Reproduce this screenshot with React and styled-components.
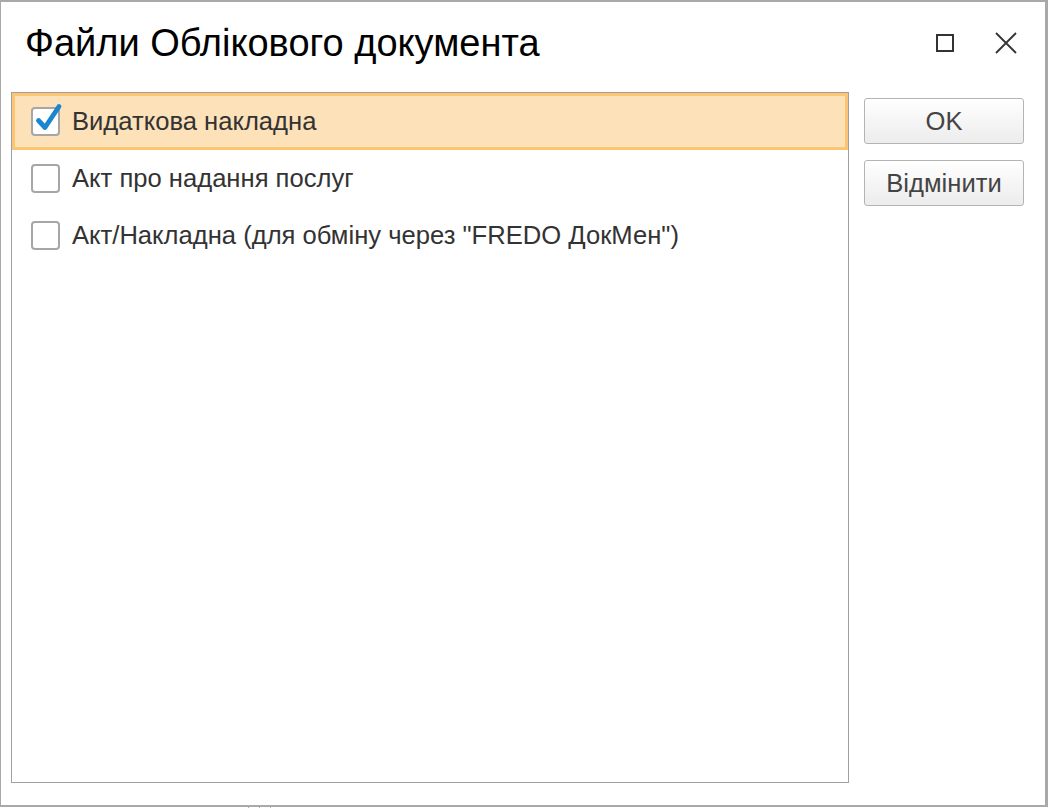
import React, { useState } from 'react'
import styled, { createGlobalStyle } from 'styled-components'

const GlobalStyle = createGlobalStyle`
  html, body {
    margin: 0;
    padding: 0;
    background: #ffffff;
  }
  body {
    font-family: "Liberation Sans", Arial, sans-serif;
  }
`;

const items = [
  'Видаткова накладна',
  'Акт про надання послуг',
  'Акт/Накладна (для обміну через "FREDO ДокМен")',
];

const App = () => {
  const [checked, setChecked] = useState([true, false, false]);
  const toggle = (i) => setChecked(checked.map((c, j) => (j === i ? !c : c)));

  return (
    <Page>
      <GlobalStyle />
      <Window>
        {/* Title bar */}
        <TitleBar>
          <Title>Файли Облікового документа</Title>
          <WindowButtons>
            <IconButton aria-label="maximize">
              <svg width="20" height="20" viewBox="0 0 20 20">
                <rect x="2" y="2" width="16" height="16" fill="none" stroke="#333" strokeWidth="2" />
              </svg>
            </IconButton>
            <IconButton aria-label="close">
              <svg width="22" height="22" viewBox="0 0 22 22">
                <path d="M1 1 L21 21 M21 1 L1 21" stroke="#333" strokeWidth="1.8" fill="none" />
              </svg>
            </IconButton>
          </WindowButtons>
        </TitleBar>

        {/* Body */}
        <Body>
          <List>
            {items.map((label, i) => (
              <Row key={label} $selected={i === 0} onClick={() => toggle(i)}>
                <Check>
                  {checked[i] && (
                    <svg width="29" height="29" viewBox="0 0 29 29">
                      <path
                        d="M7.5 13.5 L14 20.5 L28 -0.5"
                        stroke="#1a86cf"
                        strokeWidth="4.8"
                        strokeLinecap="round"
                        strokeLinejoin="round"
                        fill="none"
                      />
                    </svg>
                  )}
                </Check>
                <Label>{label}</Label>
              </Row>
            ))}
          </List>
          <Side>
            <Button>OK</Button>
            <Button>Відмінити</Button>
          </Side>
        </Body>
      </Window>
      <Ticks>
        <span />
        <span />
        <span />
      </Ticks>
    </Page>
  )
}

const Page = styled.div`
  width: 1048px;
  height: 808px;
  background: #ffffff;
  display: flex;
  flex-direction: column;
`;

const Window = styled.div`
  box-sizing: border-box;
  width: 1048px;
  height: 807px;
  border-style: solid;
  border-color: #a9a9a9;
  border-width: 2px 3px 2px 1px;
  background: #ffffff;
  display: flex;
  flex-direction: column;
`;

const TitleBar = styled.div`
  height: 88px;
  display: flex;
  align-items: center;
  padding: 0 0 0 24px;
  box-sizing: border-box;
  margin-top: -3px;
`;

const Title = styled.div`
  flex: 1;
  font-size: 38px;
  color: #000;
  white-space: nowrap;
`;

const WindowButtons = styled.div`
  display: flex;
  gap: 40px;
  padding-right: 28px;
  align-items: center;
`;

const IconButton = styled.div`
  display: flex;
  align-items: center;
  justify-content: center;
`;

const Body = styled.div`
  display: flex;
  padding: 5px 0 0 10px;
  gap: 15px;
`;

const List = styled.div`
  box-sizing: border-box;
  width: 838px;
  height: 691px;
  border: 1px solid #a0a0a0;
  display: flex;
  flex-direction: column;
`;

const Row = styled.div`
  box-sizing: border-box;
  height: 57px;
  display: flex;
  align-items: center;
  gap: 12px;
  padding-left: ${({ $selected }) => ($selected ? '16px' : '19px')};
  background: ${({ $selected }) => ($selected ? '#fde1b9' : 'transparent')};
  border: ${({ $selected }) => ($selected ? '3px solid #fbc574' : 'none')};
  cursor: default;
`;

const Check = styled.div`
  box-sizing: border-box;
  width: 29px;
  height: 29px;
  border: 2px solid #a6a6a6;
  border-radius: 4px;
  background: #fff;
  position: relative;

  svg {
    position: absolute;
    left: -2px;
    top: -2px;
    overflow: visible;
  }
`;

const Label = styled.span`
  font-size: 25.6px;
  color: #333333;
  white-space: nowrap;
`;

const Side = styled.div`
  display: flex;
  flex-direction: column;
  gap: 16px;
  padding-top: 6px;
`;

const Button = styled.button`
  box-sizing: border-box;
  width: 160px;
  height: 46px;
  border: 1px solid #b4b4b4;
  border-radius: 3px;
  background: linear-gradient(#ffffff, #ececec);
  font-family: "Liberation Sans", Arial, sans-serif;
  font-size: 25.6px;
  color: #444444;
  padding: 0;
  cursor: pointer;
`;

const Ticks = styled.div`
  display: flex;
  margin-left: 248px;
  height: 1px;

  span {
    width: 10px;
    height: 1px;
    border-left: 1px solid #b0b0b0;
  }
`;

export default App
